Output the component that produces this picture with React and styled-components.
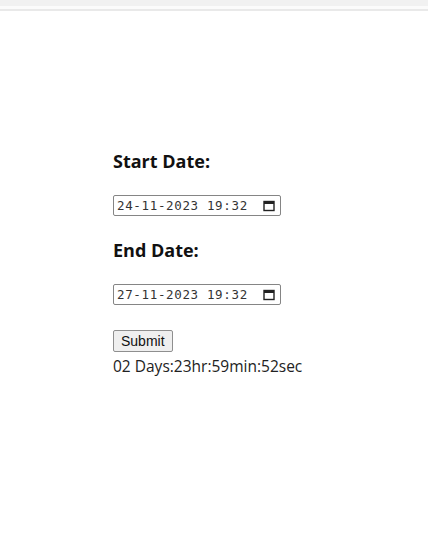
import React from "react";
import styled, { createGlobalStyle } from "styled-components";

const GlobalStyle = createGlobalStyle`
  body {
    margin: 0;
    background: #ffffff;
    font-family: "Open Sans", "Noto Sans", sans-serif;
    color: #1a1a1a;
  }
`;

const TopBar = styled.div`
  height: 6px;
  background-color: #f1f1f1;
  border-bottom: 3px solid #fbfbfb;
`;

const TopLine = styled.div`
  height: 2px;
  background-color: #e9e9e9;
`;

const Page = styled.div`
  padding: 137px 0 0 113px;
  height: 395px;
`;

const Label = styled.h3`
  margin: 0 0 21px 0;
  font-size: 18px;
  font-weight: 700;
  line-height: 26px;
  color: #111;
`;

const DateBox = styled.div`
  box-sizing: border-box;
  width: 168px;
  height: 21px;
  border: 1px solid #858585;
  border-radius: 2px;
  display: flex;
  align-items: center;
  justify-content: space-between;
  padding: 0 5px 0 3px;
  margin-bottom: ${(p) => p.$gap}px;
  font-family: "DejaVu Sans Mono", "Liberation Mono", monospace;
  font-size: 12.5px;
  color: #333;
  letter-spacing: 0.65px;
`;

const Submit = styled.button`
  display: block;
  height: 22px;
  padding: 1px 7px;
  font-family: Arial, "Liberation Sans", sans-serif;
  font-size: 14px;
  color: #111;
  background-color: #efefef;
  border: 1px solid #8f8f8f;
  border-radius: 2px;
`;

const Result = styled.div`
  margin-top: 3px;
  font-size: 15.5px;
  line-height: 22px;
  color: #222;
`;

const CalendarIcon = () => (
  <svg width="12" height="12" viewBox="0 0 12 12">
    <rect x="1" y="1.5" width="10" height="9" fill="none" stroke="#222" strokeWidth="1.4" />
    <rect x="1" y="1.5" width="10" height="2.5" fill="#222" />
  </svg>
);

const DateField = ({ value, gap }) => (
  <DateBox $gap={gap}>
    <span>{value}</span>
    <CalendarIcon />
  </DateBox>
);

export default function App() {
  return (
    <>
      <GlobalStyle />
      <TopBar />
      <TopLine />
      <Page>
        <Label>Start Date:</Label>
        <DateField value="24-11-2023 19:32" gap={21} />
        <Label>End Date:</Label>
        <DateField value="27-11-2023 19:32" gap={25} />
        <Submit>Submit</Submit>
        <Result>02 Days:23hr:59min:52sec</Result>
      </Page>
    </>
  );
}
